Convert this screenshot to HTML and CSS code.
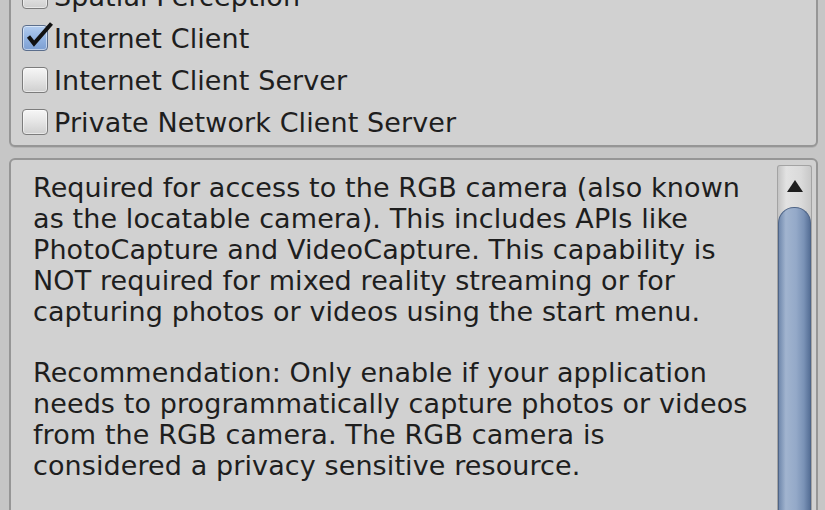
FILE: index.html
```html
<!DOCTYPE html>
<html>
<head>
<meta charset="utf-8">
<link rel="stylesheet" href="styles.css">
</head>
<body>
<div class="panel">
  <div class="box caps">
    <div class="row"><span class="check"></span><span class="label">Spatial Perception</span></div>
    <div class="row"><span class="check on"><svg class="tick" width="30" height="30" viewBox="0 0 30 30"><path d="M4.5 14.5 L10 21.5 L27.5 1.5" fill="none" stroke="#111" stroke-width="4" stroke-linejoin="miter" stroke-linecap="butt"/></svg></span><span class="label">Internet Client</span></div>
    <div class="row"><span class="check"></span><span class="label">Internet Client Server</span></div>
    <div class="row"><span class="check"></span><span class="label">Private Network Client Server</span></div>
  </div>
  <div class="box desc">
    <div class="text">
      <p>Required for access to the RGB camera (also known<br>as the locatable camera). This includes APIs like<br>PhotoCapture and VideoCapture. This capability is<br>NOT required for mixed reality streaming or for<br>capturing photos or videos using the start menu.</p>
      <p>Recommendation: Only enable if your application<br>needs to programmatically capture photos or videos<br>from the RGB camera. The RGB camera is<br>considered a privacy sensitive resource.</p>
    </div>
    <div class="scrollbar">
      <div class="arrow"><span class="tri"></span></div>
      <div class="thumb"></div>
    </div>
  </div>
</div>
</body>
</html>
```
FILE: styles.css
```css
html, body {
  margin: 0;
  padding: 0;
  height: 510px;
  overflow: hidden;
  background: #c6c6c6;
}
body {
  font-family: "DejaVu Sans", sans-serif;
  font-size: 27px;
  letter-spacing: 0.1px;
  color: #1e1e1e;
}
.panel {
  display: flex;
  flex-direction: column;
  gap: 11px;
  padding-left: 9px;
  padding-right: 7px;
  margin-top: -32px;
}
.box {
  background: #d1d1d1;
  border: 2px solid #969696;
  border-radius: 6px;
  box-shadow: 0 1px 0 #b4b4b4;
}
.caps {
  padding: 5px 0 2px 11px;
  display: flex;
  flex-direction: column;
}
.row {
  height: 42px;
  display: flex;
  align-items: center;
}
.check {
  position: relative;
  flex: none;
  width: 24px;
  height: 24px;
  border: 1px solid #7c7c7c;
  border-radius: 4px;
  background: linear-gradient(#f6f6f6, #e4e4e4 50%, #cfcfcf);
  box-shadow: inset 0 0 0 1px rgba(255,255,255,0.5);
  margin-right: 6px;
}
.check.on {
  background: linear-gradient(#b3cdf0, #93b4e2 50%, #7d9fd2);
  border-color: #5b6e8c;
}
.tick {
  position: absolute;
  left: 1px;
  top: -4px;
  overflow: visible;
}
.label {
  white-space: nowrap;
  line-height: 42px;
  position: relative;
  top: 1px;
}
.desc {
  display: flex;
  height: 420px;
  padding-right: 4px;
}
.text {
  flex: 1;
  padding: 13px 0 0 22px;
  line-height: 30.9px;
  white-space: nowrap;
}
.text p {
  margin: 0 0 30.9px 0;
}
.scrollbar {
  flex: none;
  width: 33px;
  margin-top: 5px;
  border: 1px solid #a3a3a3;
  border-bottom: none;
  border-radius: 3px 3px 0 0;
  background: linear-gradient(to right, #c4c4c4, #e2e2e2 25%, #dadada 70%, #c8c8c8);
  display: flex;
  flex-direction: column;
  align-items: center;
}
.arrow {
  height: 41px;
  width: 100%;
  display: flex;
  align-items: center;
  justify-content: center;
}
.tri {
  width: 0;
  height: 0;
  border-left: 8px solid transparent;
  border-right: 8px solid transparent;
  border-bottom: 12px solid #1e1e1e;
  margin-top: -2px;
}
.thumb {
  width: 31px;
  flex: 1;
  border: 1px solid #4f6587;
  border-bottom: none;
  border-radius: 16px 16px 0 0;
  background: linear-gradient(to right, #7189ad, #a1b4cf 22%, #94a9c8 55%, #7a92b6 80%, #566f96);
}
```
